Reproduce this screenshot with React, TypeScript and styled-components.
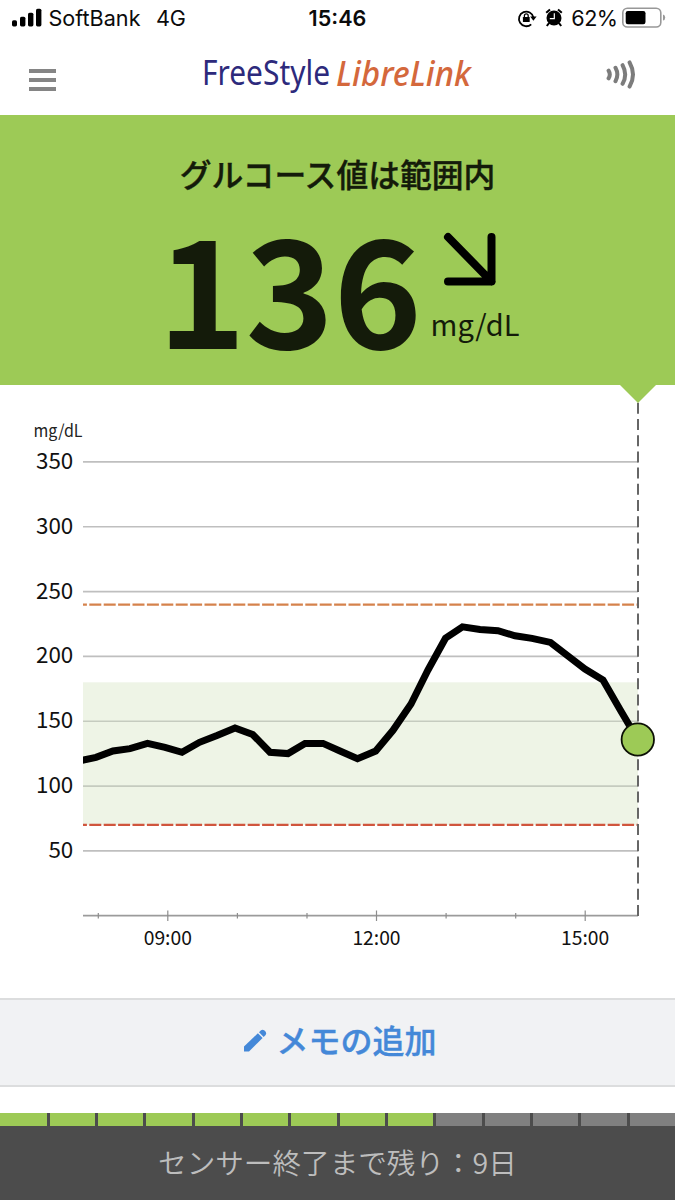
import React from "react";
import styled, { createGlobalStyle } from "styled-components";

const GREEN = "#9dca56";
const JP = '"Noto Sans CJK JP", sans-serif';

const GlobalStyle = createGlobalStyle`
  * { box-sizing: border-box; }
  body { margin: 0; background: #fff; }
`;

const Screen = styled.main`
  width: 675px;
  height: 1200px;
  display: flex;
  flex-direction: column;
  overflow: hidden;
  background: #fff;
  color: #000;
  font-family: ${JP};
`;

const StatusBar = styled.div`
  height: 36px;
  flex: none;
  display: grid;
  grid-template-columns: 1fr auto 1fr;
  align-items: center;
  padding: 0 9px 0 12px;
  font: 400 21.6px/36px Inter, sans-serif;
  color: #0b0b0b;
`;

const StatusGroup = styled.div<{ $end?: boolean }>`
  display: flex;
  align-items: center;
  justify-content: ${(p) => (p.$end ? "flex-end" : "flex-start")};
`;

const Carrier = styled.span`
  margin-left: 6.5px;
`;

const Network = styled.span`
  margin-left: 15.5px;
  letter-spacing: -0.3px;
`;

const Clock = styled.span`
  font-weight: 600;
  margin-right: 3px;
`;

const Percent = styled.span`
  margin: 0 4.5px 0 8px;
  letter-spacing: -0.5px;
`;

const AlarmIcon = styled.svg`
  margin-left: 8.5px;
`;

const Header = styled.header`
  height: 79px;
  flex: none;
  display: grid;
  grid-template-columns: 1fr auto 1fr;
  align-items: start;
  padding: 16px 38px 0 28.5px;
`;

const MenuButton = styled.button`
  width: 28px;
  height: 22px;
  margin-top: 17px;
  padding: 0;
  border: 0;
  background: none;
  display: flex;
  flex-direction: column;
  justify-content: space-between;
`;

const MenuBar = styled.span`
  width: 27.5px;
  height: 4px;
  background: #858585;
`;

const Logo = styled.svg`
  display: block;
  overflow: visible;
  margin-right: -11px;
  font-family: "Noto Sans", sans-serif;
`;

const ScanIcon = styled.svg`
  display: block;
  justify-self: end;
  margin-top: 6px;
`;

const Reading = styled.section`
  height: 270px;
  flex: none;
  background: ${GREEN};
  color: #141b0a;
  display: flex;
  flex-direction: column;
  align-items: center;
`;

const ReadingTitle = styled.h1`
  margin: 38px 0 0;
  font-size: 31.8px;
  line-height: 40px;
  font-weight: 500;
  -webkit-text-stroke: 0.4px currentColor;
`;

const ReadingRow = styled.div`
  display: flex;
  align-items: flex-start;
  margin: -4px 0 0 2px;
`;

const Value = styled.div`
  font-size: 150px;
  line-height: 190px;
  font-weight: 700;
  letter-spacing: -0.5px;
`;

const Trend = styled.div`
  display: flex;
  flex-direction: column;
  margin: 43px 0 0 9px;
`;

const TrendArrow = styled.svg`
  display: block;
  margin-left: 12.5px;
`;

const Unit = styled.span`
  margin-top: 14px;
  font-size: 29px;
  line-height: 42px;
  font-weight: 400;
`;

const Chart = styled.svg`
  display: block;
  flex: none;
`;

const NoteButton = styled.button`
  height: 89px;
  flex: none;
  width: 100%;
  padding: 0 0 7px 6px;
  border: solid #dcddde;
  border-width: 2px 0;
  background: #f1f2f4;
  color: #4488d8;
  display: flex;
  align-items: center;
  justify-content: center;
  gap: 9px;
  font: 500 32px/40px ${JP};
  -webkit-text-stroke: 0.4px currentColor;
`;

const PencilIcon = styled.svg`
  margin-top: 3px;
`;

const SensorTrack = styled.div`
  height: 13px;
  flex: none;
  margin-top: 26px;
  display: grid;
  grid-template-columns: 46.7px repeat(13, 1fr);
  gap: 3px;
  background: #4c4c4c;
`;

const SensorDay = styled.span<{ $left: boolean }>`
  background: ${(p) => (p.$left ? GREEN : "#808080")};
`;

const SensorFooter = styled.footer`
  flex: 1;
  background: #4c4c4c;
  color: #bdbdbd;
  text-align: center;
  font-size: 28.6px;
  line-height: 72px;
  font-weight: 350;
`;

const yOf = (v: number) => 530.7 - v * 1.2965;
const levels = [350, 300, 250, 200, 150, 100, 50];
const hours = [
  { x: 98.3 }, { x: 167.8, label: "09:00" }, { x: 237.4 }, { x: 307 },
  { x: 376.5, label: "12:00" }, { x: 446.1 }, { x: 515.7 }, { x: 585.2, label: "15:00" },
];
const trace: [number, number][] = [
  [80, 375.7], [96, 372.3], [113, 366], [130, 363.6], [147.5, 358.3], [165, 362.4],
  [182, 367.3], [199.5, 357.3], [217, 350.5], [235, 343], [252.7, 349.5],
  [270, 367.3], [288, 368.6], [305, 358.4], [323, 358.4], [340, 366], [357.5, 373.8],
  [375.7, 366], [393, 345.3], [411, 319], [428, 285], [445.5, 253.2], [462.5, 241.8],
  [480, 244.4], [498, 245.7], [515, 250.8], [532, 253.4], [550.5, 257.4],
  [568, 271], [585, 284], [603, 295], [620, 324.5], [638, 355],
];

function GlucoseChart() {
  return (
    <Chart width="675" height="613" viewBox="0 0 675 613" fontFamily={JP}>
      <rect x="83" y={yOf(180)} width="555" height={yOf(70) - yOf(180)} fill="#eef4e6" />
      {levels.map((v) => (
        <g key={v}>
          <path d={`M83 ${yOf(v)}H638`} stroke={v === 150 || v === 100 ? "#c5cbbf" : "#bfbfbf"} strokeWidth="1.7" />
          <text x="73.3" y={yOf(v) + 7} fontSize="22.4" textAnchor="end" fill="#111">{v}</text>
        </g>
      ))}
      <text x="33.5" y="51.5" fontSize="17" fill="#222" textLength="49" lengthAdjust="spacingAndGlyphs">mg/dL</text>
      <path d={`M83 ${yOf(240)}H638`} stroke="#d5824c" strokeWidth="2.2" strokeDasharray="12 2.4" strokeDashoffset="8.1" />
      <path d={`M83 ${yOf(70)}H638`} stroke="#d0553d" strokeWidth="2.2" strokeDasharray="12 2.4" strokeDashoffset="8.1" />
      <path d="M83 530.7H638" stroke="#9b9b9b" strokeWidth="1.7" />
      {hours.map((h) => (
        <g key={h.x}>
          <path d={h.label ? `M${h.x} 525.5V536` : `M${h.x} 528V533.5`} stroke="#8d8d8d" strokeWidth="1.2" />
          {h.label && <text x={h.x} y="559.5" fontSize="19.3" textAnchor="middle" fill="#111">{h.label}</text>}
        </g>
      ))}
      <path d="M638 17.8V531" stroke="#666" strokeWidth="2" strokeDasharray="11 5.2" />
      <path d="M620 -1H656V0L638 18L620 0Z" fill={GREEN} />
      <clipPath id="plot"><rect x="83" y="0" width="560" height="531" /></clipPath>
      <polyline points={trace.map((p) => p.join(",")).join(" ")} clipPath="url(#plot)" fill="none" stroke="#000" strokeWidth="7" />
      <circle cx="637.8" cy="354.5" r="16.2" fill={GREEN} stroke="#0c1005" strokeWidth="1.8" />
    </Chart>
  );
}

export default function App() {
  return (
    <Screen>
      <GlobalStyle />
      <StatusBar>
        <StatusGroup>
          <svg width="30" height="20" viewBox="0 0 30 20">
            <rect x="0" y="12.2" width="5" height="6.2" rx="1.6" />
            <rect x="8" y="8.7" width="5.4" height="9.7" rx="1.6" />
            <rect x="16" y="4.7" width="5.4" height="13.7" rx="1.6" />
            <rect x="24" y=".7" width="5.4" height="17.7" rx="1.6" />
          </svg>
          <Carrier>SoftBank</Carrier>
          <Network>4G</Network>
        </StatusGroup>
        <Clock>15:46</Clock>
        <StatusGroup $end>
          <svg width="20" height="20" viewBox="0 0 20 20">
            <path d="M14.2 16.3A7.3 7.3 0 1 1 16.4 9.5" fill="none" stroke="#000" strokeWidth="1.8" />
            <path d="M13.2 8.6H19.6L16.4 12.8Z" />
            <rect x="5.9" y="9" width="6.8" height="5" rx=".6" />
            <path d="M7.4 9.4V7.8a1.9 1.9 0 0 1 3.8 0V9.4" fill="none" stroke="#000" strokeWidth="1.3" />
          </svg>
          <AlarmIcon width="18" height="20" viewBox="0 0 18 20">
            <circle cx="9" cy="10" r="7.5" />
            <path d="M1.2 4.8L5 1.4M16.8 4.8L13 1.4M4 15.1L1.8 18M14 15.1L16.2 18" stroke="#000" strokeWidth="2" />
            <path d="M9.3 5.2V10.6H4.8" fill="none" stroke="#fff" strokeWidth="1.2" />
          </AlarmIcon>
          <Percent>62%</Percent>
          <svg width="44" height="22" viewBox="0 0 44 22">
            <rect x=".8" y="1.2" width="38" height="18.8" rx="4.6" fill="#fff" stroke="#989898" strokeWidth="1.6" />
            <rect x="3.7" y="4" width="19.8" height="13.2" rx="2.2" />
            <path d="M41 7.6Q43.2 8 43.2 10.6T41 13.6Z" fill="#999" />
          </svg>
        </StatusGroup>
      </StatusBar>
      <Header>
        <MenuButton aria-label="menu"><MenuBar /><MenuBar /><MenuBar /></MenuButton>
        <Logo width="272" height="46" viewBox="0 0 272 46">
          <text x="0" y="33" fontSize="34" fill="#2d2a7c" textLength="128" lengthAdjust="spacingAndGlyphs">FreeStyle</text>
          <text x="134" y="33.5" fontSize="33.5" fontStyle="italic" fontWeight="500" fill="#d4683c" textLength="135" lengthAdjust="spacingAndGlyphs">LibreLink</text>
        </Logo>
        <ScanIcon width="32" height="34" viewBox="0 0 32 34" fill="none" stroke="#7c7c7c" strokeWidth="4" strokeLinecap="round">
          <path d="M3.6 12.6Q6 16.5 3.6 20.4M10.5 9.8Q14.2 16.5 10.5 23.2M17.6 7.2Q22.8 16.5 17.6 25.8M24.6 4.4Q31.4 16.5 24.6 28.6" />
        </ScanIcon>
      </Header>
      <Reading>
        <ReadingTitle>グルコース値は範囲内</ReadingTitle>
        <ReadingRow>
          <Value>136</Value>
          <Trend>
            <TrendArrow width="56" height="56" viewBox="0 0 56 56" fill="none" stroke="#000" strokeWidth="8" strokeLinecap="round" strokeLinejoin="round">
              <path d="M5 5L48.5 49.5M48.5 5V49.5H5" />
            </TrendArrow>
            <Unit>mg/dL</Unit>
          </Trend>
        </ReadingRow>
      </Reading>
      <GlucoseChart />
      <NoteButton>
        <PencilIcon width="23" height="23" viewBox="0 0 23 23" fill="#4488d8">
          <path d="M0 22.5V17.6L13.9 4.2L18.6 8.9L5 22.5Z" />
          <path d="M15 3.2L17 1.2Q18.5 .2 20.2 1.2L21.7 2.8Q22.8 4.5 21.6 6L19.7 7.9Z" />
        </PencilIcon>
        メモの追加
      </NoteButton>
      <SensorTrack>
        {Array.from({ length: 14 }, (_, i) => <SensorDay key={i} $left={i < 9} />)}
      </SensorTrack>
      <SensorFooter>センサー終了まで残り：9日</SensorFooter>
    </Screen>
  );
}
